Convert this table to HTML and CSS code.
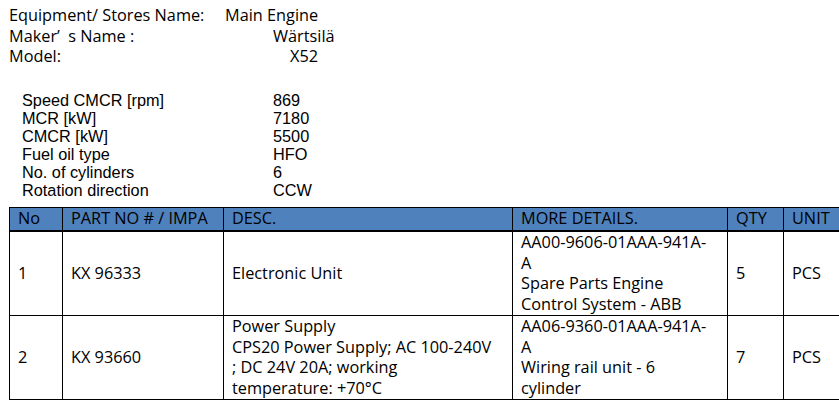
FILE: index.html
```html
<!DOCTYPE html>
<html>
<head>
<meta charset="utf-8">
<link rel="stylesheet" href="styles.css">
</head>
<body>
<div class="page">
  <div class="info">
    <div class="info-row"><span class="label">Equipment/ Stores Name:</span><span class="value">Main Engine</span></div>
    <div class="info-row"><span class="label">Maker’&nbsp; s Name :</span><span class="value v-maker">Wärtsilä</span></div>
    <div class="info-row"><span class="label">Model:</span><span class="value v-model">X52</span></div>
  </div>
  <div class="specs">
    <div class="spec-row"><span class="spec-label">Speed CMCR [rpm]</span><span>869</span></div>
    <div class="spec-row"><span class="spec-label">MCR [kW]</span><span>7180</span></div>
    <div class="spec-row"><span class="spec-label">CMCR [kW]</span><span>5500</span></div>
    <div class="spec-row"><span class="spec-label">Fuel oil type</span><span>HFO</span></div>
    <div class="spec-row"><span class="spec-label">No. of cylinders</span><span>6</span></div>
    <div class="spec-row"><span class="spec-label">Rotation direction</span><span>CCW</span></div>
  </div>
  <table class="parts">
    <colgroup>
      <col class="c-no"><col class="c-part"><col class="c-desc"><col class="c-more"><col class="c-qty"><col class="c-unit">
    </colgroup>
    <thead>
      <tr><th>No</th><th>PART NO # / IMPA</th><th>DESC.</th><th>MORE DETAILS.</th><th>QTY</th><th>UNIT</th></tr>
    </thead>
    <tbody>
      <tr>
        <td>1</td><td>KX 96333</td><td>Electronic Unit</td>
        <td>AA00-9606-01AAA-941A-<br>A<br>Spare Parts Engine<br>Control System - ABB</td>
        <td>5</td><td>PCS</td>
      </tr>
      <tr>
        <td>2</td><td>KX 93660</td>
        <td>Power Supply<br>CPS20 Power Supply; AC 100-240V<br>; DC 24V 20A; working<br>temperature: +70°C</td>
        <td>AA06-9360-01AAA-941A-<br>A<br>Wiring rail unit - 6<br>cylinder</td>
        <td>7</td><td>PCS</td>
      </tr>
    </tbody>
  </table>
</div>
</body>
</html>
```

FILE: styles.css
```css
html, body {
  margin: 0;
  padding: 0;
  background: #ffffff;
  overflow: hidden;
}
.page {
  padding: 5px 0 0 9px;
  font-family: "Open Sans", "Noto Sans", sans-serif;
  color: #000;
  width: 860px;
}
.info {
  font-size: 16.3px;
  line-height: 20.5px;
}
.info-row {
  display: flex;
}
.label {
  width: 216px;
  flex: none;
}
.v-maker { padding-left: 48px; }
.v-model { padding-left: 65px; }
.specs {
  margin-top: 24px;
  padding-left: 13px;
  font-family: "Liberation Sans", Arial, sans-serif;
  font-size: 16.3px;
  line-height: 18px;
}
.spec-row {
  display: flex;
}
.spec-label {
  width: 251px;
  flex: none;
}
.parts {
  margin-top: 8px;
  border-collapse: collapse;
  table-layout: fixed;
  width: 860px;
  font-size: 16.3px;
  line-height: 20.5px;
}
.c-no { width: 53px; }
.c-part { width: 161px; }
.c-desc { width: 289px; }
.c-more { width: 215px; }
.c-qty { width: 56px; }
.c-unit { width: 86px; }
.parts th, .parts td {
  border: 1px solid #000;
  padding: 0 8px;
  text-align: left;
  vertical-align: middle;
  font-weight: normal;
  white-space: nowrap;
}
.parts th {
  background: #4f81bd;
  height: 22px;
  border-bottom: 2px solid #000;
}
.parts td {
  height: 83px;
}
```
